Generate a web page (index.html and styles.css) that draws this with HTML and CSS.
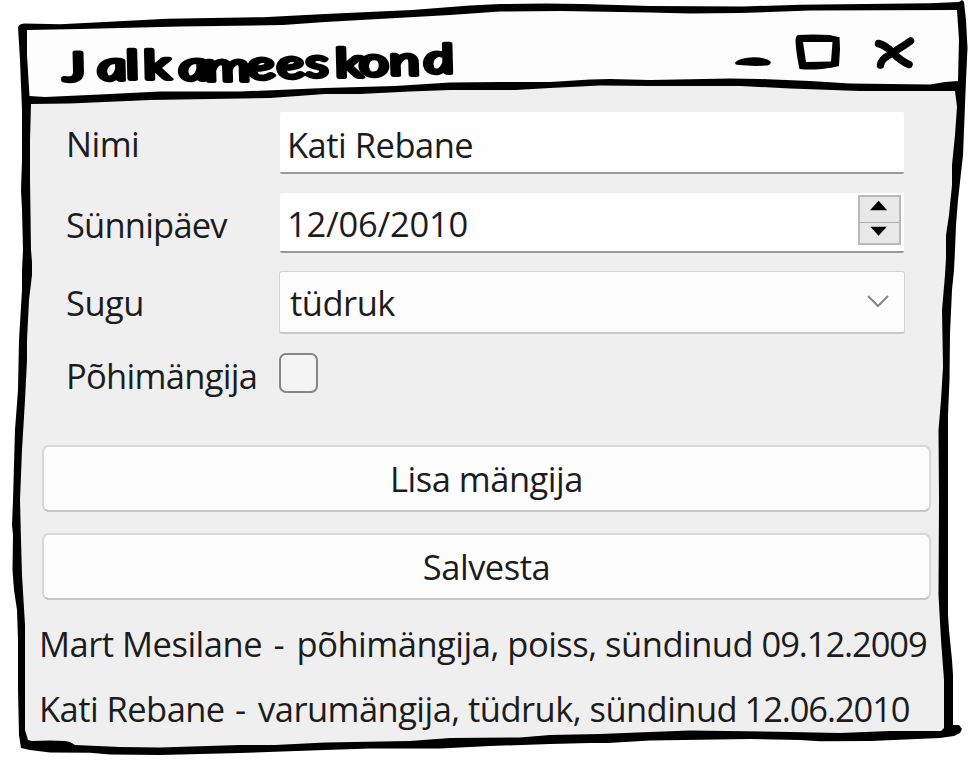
FILE: index.html
```html
<!DOCTYPE html>
<html lang="et">
<head>
<meta charset="utf-8">
<title>Jalkameeskond</title>
<link rel="stylesheet" href="styles.css">
</head>
<body>
<div class="window">
  <svg class="frame" viewBox="0 0 975 761" aria-hidden="true">
    <path fill="#000" d="M18 27L20 24.5L24 23.5L60 24.2L95 22.5L167 18.7L263 17.2L325 14L412 10L470 5.5L500 4L545 3.6L583 4L650 6L743 6.5L800 4.8L930 3.2L959 2L962 0L964 2L966 20L967.5 48L966 80L964 130L963 155L958 200L956 225L955 250L954 270L952 290L950 333L949.5 380L948 415L948 500L948 615L949 630L952 660L953 675L953 725L959 725L962 729L960 733L954 736L940 738L870 741L820 741.3L800 740L750 739L650 740.5L608 743L590 743L550 744L490 746L440 748.5L370 748.5L325 750L240 753L160 755L110 754.5L90 752.8L50 752.5L30 750L21 748L19 735L18 690L18 640L17 610L14 590L12.5 570L13 535L12 525L13 500L15 430L18 390L19 340L22 290L22 270L23 250L22 210L21 190L22 160L22 110L20 60Z"/>
    <path fill="#fdfdfd" d="M27 30L80 29L180 26.5L283 25L325 22L450 15L500 11.5L560 11L650 12.5L690 13.5L740 13L810 10.5L957 10L959 40L958 81L945 82L930 84.5L850 83.5L810 81L760 79L730 78.5L650 80L610 79L590 79.5L550 82L500 82L450 82.5L395 86L325 88L240 91.5L160 91.5L100 94.5L45 97L29.5 96L27 55Z"/>
    <path fill="#efefef" d="M31 104L70 103.5L150 100L270 98L325 94L360 94L410 91.5L450 90L515 90L550 88L600 85.5L650 86L740 86L790 88.5L860 91L955 91L957 107L955 135L952 165L952 185L949 215L946 235L946 258L945 275L942 310L943 367L941 400L938.5 430L939 500L938.5 595L941 640L944 680L944 728L941 731L890 731L840 733L790 732L690 730.5L650 732L600 734L550 735L520 737.5L450 738L410 741L325 742.5L275 745L240 745L160 747.5L120 747L75 745L70 742L65 741L50 740.5L32 741L28 740L25 730L25 625L22 575L21 540L20 500L22 450L25 400L27 360L27 340L29 300L32 275L32 262L31 250L30 180L30 140Z"/>
  </svg>
  <header class="titlebar">
    <svg class="title" viewBox="0 0 420 60">
      <text transform="translate(-10 0) scale(1.45 1) skewX(8)" x="8 32 52 64 88 106 135.500 156 176 196.500 213 234 258" y="46 45 44 44 45 46 44 43.500 42.500 42 41 40 38">Jalkameeskond</text>
    </svg>
    <svg class="controls" viewBox="0 0 186 44">
      <path d="M2 27.500Q7 22.500 21 22.300Q34 22.500 38 27Q37 30.500 34 30.500L22 31L6 30Q2 30 2 27.500Z"/>
      <path fill-rule="evenodd" d="M65 0Q79-1 97 0Q105 2 106.500 2L107 14L106 31Q99 33 89 34Q76 35 66.500 34Q63 18 62.500 6Q62.500 1 65 0ZM70 7L73 27L98 26.500L99.500 7Z"/>
      <path class="cross" d="M145.500 8.500Q152 10 159 17Q169 27 176 29.500M177.500 6Q172 10 167 13L158 19Q148 24 147.500 30"/>
    </svg>
  </header>
  <main class="body">
    <div class="form">
      <label class="label l1">Nimi</label>
      <div class="field text-field"><span>Kati Rebane</span></div>
      <label class="label l2">Sünnipäev</label>
      <div class="field date-field"><span class="date">12/06/2010</span>
        <div class="spin">
          <svg viewBox="0 0 38 22"><path d="M9 14L18 4L27 14Z"/></svg>
          <svg viewBox="0 0 38 22"><path d="M9 4L18 14L27 4Z"/></svg>
        </div>
      </div>
      <label class="label l3">Sugu</label>
      <div class="select"><span>tüdruk</span>
        <svg class="chevron" viewBox="0 0 24 16"><path d="M2 3L12 13L22 3"/></svg>
      </div>
      <label class="label l4">Põhimängija</label>
      <div class="check"></div>
    </div>
    <div class="button">Lisa mängija</div>
    <div class="button">Salvesta</div>
    <p class="row">Mart Mesilane <span class="dash">-</span> põhimängija, poiss, sündinud <span class="born">09.12.2009</span></p>
    <p class="row second">Kati Rebane <span class="dash">-</span> varumängija, tüdruk, sündinud <span class="born">12.06.2010</span></p>
  </main>
</div>
</body>
</html>
```
FILE: styles.css
```css
* { box-sizing: border-box; }
body {
  margin: 0;
  background: #fff;
  color: #1c1c1c;
  font-family: "Open Sans", sans-serif;
  font-size: 34.5px;
  letter-spacing: -0.5px;
  white-space: nowrap;
}
.window { position: relative; width: 975px; height: 761px; overflow: hidden; }
.frame { position: absolute; inset: 0; width: 975px; height: 761px; z-index: -1; }
.titlebar {
  height: 112px;
  padding: 35px 56px 0 54px;
  display: flex;
  justify-content: space-between;
}
.title { width: 420px; height: 60px; overflow: visible; }
.title text {
  font-family: "Lato", sans-serif;
  font-size: 40px;
  font-style: italic;
  letter-spacing: 0;
  fill: #000;
  stroke: #000;
  stroke-width: 3.8px;
  stroke-linejoin: round;
}
.controls { width: 186px; height: 44px; overflow: visible; }
.controls .cross { fill: none; stroke: #000; stroke-width: 7.5px; stroke-linecap: round; }
.body { padding: 0 44px 0 42px; display: flex; flex-direction: column; }
.form {
  display: grid;
  grid-template-columns: 213px 626px;
  grid-template-rows: 62px 60px 62px 40px;
  row-gap: 19px;
  padding-left: 24px;
  height: 333px;
}
.label, .field, .select { display: flex; align-items: center; line-height: 46px; }
.label { align-self: center; }
.l1 { padding-top: 2px; }
.l2 { padding-top: 3px; letter-spacing: -0.8px; }
.l3 { padding-top: 0; }
.l4 { padding-top: 5px; letter-spacing: -0.7px; }
.field {
  margin: 0 1px;
  padding-left: 7px;
  background: #fefefe;
  border-bottom: 2px solid #9b9b9b;
  border-radius: 2px;
}
.text-field { padding-top: 6px; }
.date-field { justify-content: space-between; padding-right: 3px; }
.date { padding-top: 4px; letter-spacing: -0.2px; }
.spin {
  width: 43px;
  height: 50px;
  margin-bottom: 4px;
  border: 2px solid #b9b9b9;
  background: #e8e8e8;
  display: grid;
  grid-template-rows: 25px 21px;
}
.spin svg { width: 39px; height: 21px; }
.spin svg + svg { border-top: 1px solid #b0b0b0; }
.select {
  margin-top: -1px;
  justify-content: space-between;
  padding: 1px 14px 0 10px;
  background: #fdfdfd;
  border: 1.5px solid #d4d4d4;
  border-bottom: 2px solid #c8c8c8;
  border-radius: 3px;
}
.chevron { width: 24px; height: 16px; margin-bottom: 3px; }
.chevron path { fill: none; stroke: #858585; stroke-width: 2; }
.check {
  width: 39px;
  height: 40px;
  border: 2px solid #868686;
  border-radius: 7px;
  background: #f4f4f4;
}
.button {
  height: 67px;
  margin-bottom: 21px;
  display: flex;
  align-items: center;
  justify-content: center;
  background: #fdfdfd;
  border: 2px solid #d8d8d8;
  border-bottom-color: #c6c6c6;
  border-radius: 7px;
}
.row { margin: 0 0 19px -3px; line-height: 46px; }
.dash { margin: 0 4px 0 3px; }
.born { letter-spacing: -1.1px; }
.second { letter-spacing: -0.55px; }
.second .dash { margin: 0 4px 0 2px; }
.second .born { margin-left: -1px; letter-spacing: -1.1px; }
```
